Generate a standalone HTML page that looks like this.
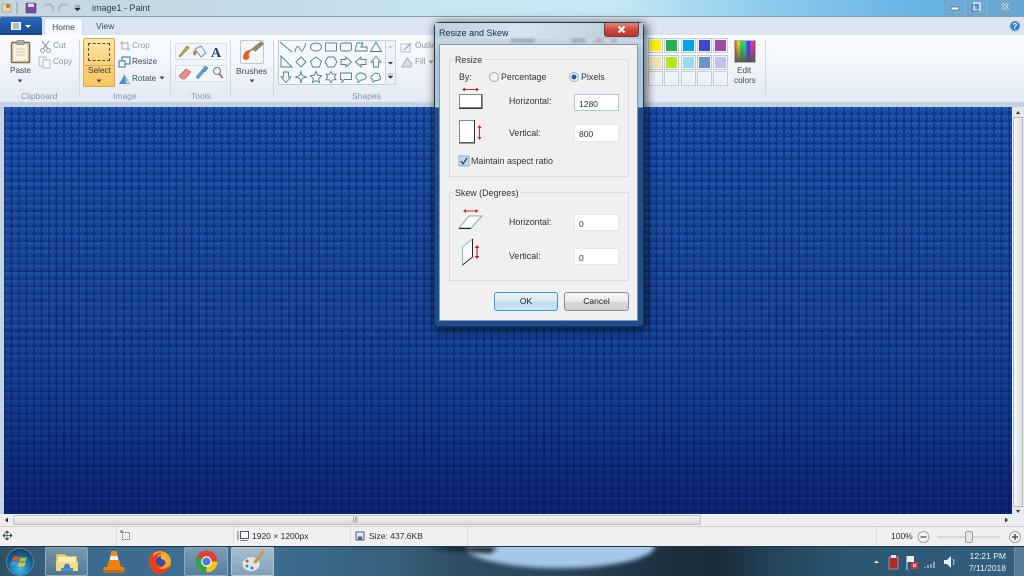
<!DOCTYPE html>
<html><head><meta charset="utf-8"><style>
html,body{margin:0;padding:0;width:1024px;height:576px;overflow:hidden;background:#dce6f1}
*{box-sizing:border-box}
body{font-family:"Liberation Sans",sans-serif;position:relative}
#w{position:absolute;left:0;top:0;width:1024px;height:576px;overflow:hidden;filter:blur(.35px)}
.a{position:absolute}
.t{position:absolute;font-size:8.2px;color:#3b4a5e;white-space:nowrap;line-height:10px}
.g{color:#8d97a3}
.lab{position:absolute;font-size:8.5px;color:#8a97a8;white-space:nowrap;line-height:10px}
.sep{position:absolute;top:39px;width:1px;height:57px;background:#cfd8e3}
.sw{position:absolute;width:15px;height:15px;border:1px solid #c4ccd6;outline:1px solid #f2f5f9;outline-offset:-2px}
.d{position:absolute;font-size:8.9px;color:#333;white-space:nowrap;line-height:10px}
.inp{position:absolute;left:574px;width:45px;background:#fff;border:1px solid #e6e9ec;font-size:8.5px;color:#333;padding:4px 0 0 4px;line-height:10px}
.box{position:absolute;border:1px solid #dcdcdc;border-radius:2px}
.tb{position:absolute;top:547px;height:29px;border-radius:2px}
</style></head><body><div id="w">

<!-- title bar -->
<div class="a" style="left:0;top:0;width:1024px;height:17px;background:linear-gradient(90deg,#c6d6e0 0,#c4dae6 25%,#c8e6f2 45%,#c4e8f4 60%,#8ccbec 75%,#66b3e4 90%,#5ea9dc 100%);border-bottom:1px solid #8b9cab"></div>
<div class="a" style="left:92px;top:2px;font-size:9px;color:#2c3a48;line-height:12px">image1 - Paint</div>
<svg class="a" style="left:0;top:0" width="90" height="17">
<rect x="2" y="4" width="9" height="8" fill="#e8d8a8" stroke="#88a" stroke-width=".6"/>
<circle cx="8" cy="6" r="2" fill="#d07030"/>
<line x1="17" y1="2" x2="17" y2="14" stroke="#8fa0ae"/>
<rect x="26" y="3" width="10" height="10" rx="1" fill="#7a4a9e" stroke="#4c3a78" stroke-width=".6"/><rect x="28" y="3.500" width="6" height="3.500" fill="#ddd"/>
<path d="M44 6 Q49 2 53 7 L53 11" stroke="#aab4bc" fill="none" stroke-width="1.600"/>
<path d="M68 6 Q63 2 59 7 L59 11" stroke="#aab4bc" fill="none" stroke-width="1.600"/>
<path d="M75 6h5M74.500 8h6l-3 3z" fill="#333" stroke="#333" stroke-width=".5"/>
</svg>
<!-- window buttons -->
<div class="a" style="left:944px;top:0;width:76px;height:15px;background:rgba(120,165,195,.4);border:1px solid #7f9db5;border-top:0;border-radius:0 0 3px 3px"></div>
<svg class="a" style="left:944px;top:0" width="76" height="16">
<line x1="21" y1="0" x2="21" y2="15" stroke="#8fb0c8"/><line x1="43" y1="0" x2="43" y2="15" stroke="#8fb0c8"/>
<rect x="7" y="7" width="8" height="3" fill="#eef4f8" stroke="#53677a" stroke-width=".7"/>
<rect x="30" y="3" width="6" height="7" fill="none" stroke="#dfe9f0" stroke-width="1.400"/><rect x="28" y="5" width="6" height="6" fill="none" stroke="#53677a" stroke-width=".8"/>
<path d="M58 3.500l6 6M64 3.500l-6 6" stroke="#dfe8ee" stroke-width="2.600"/><path d="M58 3.500l6 6M64 3.500l-6 6" stroke="#5a6d80" stroke-width=".7"/>
</svg>

<!-- tabs -->
<div class="a" style="left:0;top:17px;width:1024px;height:18px;background:#dbe5f1"></div>
<div class="a" style="left:0;top:17px;width:42px;height:18px;background:linear-gradient(#2b6cb8,#16498f);border-radius:2px 2px 0 0"></div>
<svg class="a" style="left:10px;top:20px" width="24" height="12"><rect x="1" y="2" width="10" height="8" fill="#eef3f8"/><path d="M3 4h6M3 6h6M3 8h6" stroke="#456" stroke-width=".7"/><path d="M15 5h6l-3 3z" fill="#fff"/></svg>
<div class="a" style="left:44px;top:18px;width:39px;height:18px;background:#f7fafd;border:1px solid #cfd9e5;border-bottom:0;border-radius:2px 2px 0 0;font-size:8.500px;color:#3a4a60;text-align:center;line-height:17px">Home</div>
<div class="t" style="left:96px;top:21px;font-size:8.500px">View</div>
<svg class="a" style="left:1009px;top:20px" width="13" height="13"><circle cx="6" cy="6" r="5" fill="#3f78c9" stroke="#9fc0e6"/><text x="6" y="9" font-size="8" font-family="Liberation Sans" font-weight="bold" fill="#fff" text-anchor="middle">?</text></svg>

<!-- ribbon -->
<div class="a" style="left:0;top:35px;width:1024px;height:67px;background:linear-gradient(#fbfcfe 0,#f1f5fa 45%,#e3eaf4 100%)"></div>
<div class="a" style="left:0;top:102px;width:1024px;height:5px;background:#c6d2df"></div>
<div class="sep" style="left:79px"></div><div class="sep" style="left:170px"></div><div class="sep" style="left:230px"></div><div class="sep" style="left:273px"></div><div class="sep" style="left:765px"></div>

<!-- clipboard -->
<svg class="a" style="left:9px;top:39px" width="24" height="26"><rect x="2.500" y="3.500" width="18" height="20" rx="1" fill="#e9dcc3" stroke="#8a6a40" stroke-width="1.500"/><rect x="5" y="6" width="13" height="15" fill="#f6f2e6"/><path d="M7 10h9M7 13h9M7 16h9" stroke="#c5bba5" stroke-width=".8"/><rect x="8" y="1.500" width="7" height="4" fill="#a9adb2" stroke="#666" stroke-width=".5"/></svg>
<div class="t" style="left:10px;top:66px">Paste</div>
<svg class="a" style="left:17px;top:79px" width="6" height="4"><path d="M0.500 0.500h5l-2.500 3z" fill="#445"/></svg>
<svg class="a" style="left:39px;top:40px" width="14" height="13"><path d="M3 1l6 8M10 1l-6 8" stroke="#9aa3ad" stroke-width="1.400"/><circle cx="3.500" cy="10.500" r="2" fill="none" stroke="#9aa3ad"/><circle cx="9.500" cy="10.500" r="2" fill="none" stroke="#9aa3ad"/></svg>
<div class="t g" style="left:53px;top:41px">Cut</div>
<svg class="a" style="left:38px;top:56px" width="14" height="13"><rect x="1" y="1" width="7" height="9" fill="#f3f5f8" stroke="#b5bcc5"/><rect x="5" y="4" width="7" height="8" fill="#f7f8fb" stroke="#b5bcc5"/></svg>
<div class="t g" style="left:53px;top:57px">Copy</div>
<div class="lab" style="left:21px;top:91px">Clipboard</div>

<!-- image -->
<div class="a" style="left:83px;top:38px;width:32px;height:49px;background:linear-gradient(#fde5a8 0,#fbd27e 50%,#f9c65f 100%);border:1px solid #d9a94f;border-radius:2px"></div>
<div class="a" style="left:84px;top:65px;width:30px;height:1px;background:#d9a94f"></div>
<div class="a" style="left:88px;top:43px;width:22px;height:18px;border:1px dashed #5a5244"></div>
<div class="t" style="left:88px;top:66px;color:#333">Select</div>
<svg class="a" style="left:96px;top:79px" width="6" height="4"><path d="M0.500 0.500h5l-2.500 3z" fill="#445"/></svg>
<svg class="a" style="left:119px;top:40px" width="12" height="12"><path d="M3 1v8h8M1 3h8v8" fill="none" stroke="#a2aab3"/></svg>
<div class="t g" style="left:132px;top:41px">Crop</div>
<svg class="a" style="left:118px;top:56px" width="13" height="12"><rect x="4" y="1" width="8" height="7" fill="#f3f6fb" stroke="#2c6fa8"/><rect x="1" y="5" width="6" height="6" fill="#fff" stroke="#2c6fa8"/></svg>
<div class="t" style="left:132px;top:57px">Resize</div>
<svg class="a" style="left:118px;top:72px" width="13" height="13"><path d="M1 12L7 2l1 10z" fill="#4a90c8"/><path d="M8 12V5l4 7z" fill="#b9d4ea" stroke="#7aa6c8" stroke-width=".5"/></svg>
<div class="t" style="left:132px;top:74px">Rotate</div>
<svg class="a" style="left:159px;top:76px" width="6" height="4"><path d="M0.500 0.500h5l-2.500 3z" fill="#445"/></svg>
<div class="lab" style="left:113px;top:91px">Image</div>

<!-- tools -->
<div class="a" style="left:175px;top:43px;width:52px;height:17px;background:#f2f6fb;border:1px solid #d8dfe8;border-radius:2px"></div>
<div class="a" style="left:175px;top:65px;width:52px;height:17px;background:#f2f6fb;border:1px solid #d8dfe8;border-radius:2px"></div>
<svg class="a" style="left:175px;top:43px" width="52" height="40">
<path d="M4 13l8-10 2 2-9 9z" fill="#d9a93c" stroke="#7b6a3a" stroke-width=".6"/>
<path d="M20 6l6-3 5 7-5 4z" fill="#e9f2fa" stroke="#5d8bb0" stroke-width=".8"/><path d="M19 7l3 2-2 4-2-2z" fill="#dd6a4a"/>
<text x="36" y="14" font-size="14" font-weight="bold" font-family="Liberation Serif" fill="#1f3f73">A</text>
<path d="M4 33l7-7 5 3-6 7H7z" fill="#ea8c8c" stroke="#b25a5a" stroke-width=".6"/>
<path d="M21 34l6-7 2 2-6 7zM27 27l3-4 3 2-3 4z" fill="#5f9fd0" stroke="#3f6d96" stroke-width=".5"/>
<circle cx="42" cy="28" r="3.500" fill="#eef" stroke="#778" stroke-width="1"/><path d="M44.500 31l3 4" stroke="#7a6a50" stroke-width="1.500"/>
</svg>
<div class="lab" style="left:191px;top:91px">Tools</div>

<!-- brushes -->
<div class="a" style="left:240px;top:40px;width:24px;height:24px;background:#f4f6f8;border:1px solid #c3c7cc;border-radius:2px"></div>
<svg class="a" style="left:240px;top:40px" width="26" height="25"><path d="M3 18c0-6 5-9 10-8-3 1-5 4-4 6 1 2-1 4-3 4-1 0-3-1-3-2z" fill="#e0622a"/><path d="M10 10c3-1 5 1 5 2l9-8-3-3z" fill="#8f8672"/></svg>
<div class="t" style="left:236px;top:66px;font-size:8.500px">Brushes</div>
<svg class="a" style="left:249px;top:79px" width="6" height="4"><path d="M0.500 0.500h5l-2.500 3z" fill="#445"/></svg>

<!-- shapes -->
<div class="a" style="left:278px;top:40px;width:108px;height:45px;background:#f4f7fb;border:1px solid #bfcbd9"></div>
<div class="a" style="left:385px;top:40px;width:11px;height:45px;background:#eef2f7;border:1px solid #cdd6e0"></div>
<svg class="a" style="left:278px;top:40px" width="108" height="45" fill="none" stroke="#4f8190" stroke-width=".9">
<g transform="translate(8 7)"><path d="M-6-5L6 5"/></g>
<g transform="translate(23 7)"><path d="M-6 5c1-6 3-7 5-3s3 2 6-6"/></g>
<g transform="translate(38 7)"><ellipse rx="5.500" ry="4"/></g>
<g transform="translate(53 7)"><rect x="-5.500" y="-4" width="11" height="8"/></g>
<g transform="translate(68 7)"><rect x="-5.500" y="-4" width="11" height="8" rx="2"/></g>
<g transform="translate(83 7)"><path d="M-6 4l2-8h6l-2 4h6v4z"/></g>
<g transform="translate(98 7)"><path d="M0-5l5.500 9.500h-11z"/></g>
<g transform="translate(8 22)"><path d="M-5-6V5H6z"/></g>
<g transform="translate(23 22)"><path d="M0-5l5 5-5 5-5-5z"/></g>
<g transform="translate(38 22)"><path d="M0-5l5.500 4-2 6h-7l-2-6z"/></g>
<g transform="translate(53 22)"><path d="M-3-5h6l3 5-3 5h-6l-3-5z"/></g>
<g transform="translate(68 22)"><path d="M-5-2.500h5V-5l5.500 5L0 5V2.500h-5z"/></g>
<g transform="translate(83 22)"><path d="M5-2.500H0V-5l-5.500 5L0 5V2.500h5z"/></g>
<g transform="translate(98 22)"><path d="M-2.500 5V0H-5l5-5.500L5 0H2.500v5z"/></g>
<g transform="translate(8 37)"><path d="M-2.500-5V0H-5l5 5.500L5 0H2.500v-5z"/></g>
<g transform="translate(23 37)"><path d="M0-5.500l1.300 4.200 4.200 1.300-4.200 1.300L0 5.500-1.300 1.300-5.500 0l4.200-1.300z"/></g>
<g transform="translate(38 37)"><path d="M0-5.500l1.700 3.700 4 .5-3 2.800.8 4L0 3.500-3.500 5.500l.8-4-3-2.800 4-.5z"/></g>
<g transform="translate(53 37)"><path d="M0-5.500l1.700 2.700h3.300L3.300 0 5 2.800H1.700L0 5.500-1.700 2.800H-5L-3.300 0-5-2.800h3.300z"/></g>
<g transform="translate(68 37)"><path d="M-5.500-4h11v6.500h-7l-2.500 3v-3h-1.500z"/></g>
<g transform="translate(83 37)"><path d="M-3 2.500C-7 1-5-4 0-4s7 5 3 6.500c-1 .5-2 .5-3 .5l-3 2.500z"/></g>
<g transform="translate(98 37)"><path d="M-3.500 2.500c-3-2-1-4 0-4 .5-2 3-3 4-2 2-.5 4 1 3 3 2 1 1 3.500-1 3.500-1 1-2 .5-3 .5L-3 5z"/></g>
</svg>
<svg class="a" style="left:386px;top:42px" width="9" height="42"><path d="M2.500 6h4L4.500 3z" fill="#c3ccd6"/><path d="M2 20h5l-2.500 2.500z" fill="#334"/><path d="M2 32h5M2 34h5l-2.500 2.500z" fill="#334" stroke="#334" stroke-width=".4"/></svg>
<svg class="a" style="left:399px;top:41px" width="14" height="28"><rect x="2" y="3" width="9" height="8" fill="none" stroke="#b5bdc6"/><path d="M5 9l7-7" stroke="#a8b0ba" stroke-width="1.500"/><path d="M3 26l5-9 5 6-1 3z" fill="#d6dde6" stroke="#aab3bf"/></svg>
<div class="t g" style="left:415px;top:41px">Outline</div>
<div class="t g" style="left:415px;top:57px">Fill</div>
<svg class="a" style="left:428px;top:60px" width="6" height="4"><path d="M0.500 0.500h5l-2.500 3z" fill="#99a"/></svg>
<div class="lab" style="left:352px;top:91px">Shapes</div>

<!-- colors -->
<div class="sw" style="left:648px;top:38px;background:#fff200"></div>
<div class="sw" style="left:664px;top:38px;background:#22b14c"></div>
<div class="sw" style="left:681px;top:38px;background:#00a2e8"></div>
<div class="sw" style="left:697px;top:38px;background:#3f48cc"></div>
<div class="sw" style="left:713px;top:38px;background:#a349a4"></div>
<div class="sw" style="left:648px;top:55px;background:#efe4b0"></div>
<div class="sw" style="left:664px;top:55px;background:#b5e61d"></div>
<div class="sw" style="left:681px;top:55px;background:#99d9ea"></div>
<div class="sw" style="left:697px;top:55px;background:#7092be"></div>
<div class="sw" style="left:713px;top:55px;background:#c8bfe7"></div>
<div class="sw" style="left:648px;top:71px;background:#eef2f8"></div>
<div class="sw" style="left:664px;top:71px;background:#eef2f8"></div>
<div class="sw" style="left:681px;top:71px;background:#eef2f8"></div>
<div class="sw" style="left:697px;top:71px;background:#eef2f8"></div>
<div class="sw" style="left:713px;top:71px;background:#eef2f8"></div>
<div class="a" style="left:734px;top:40px;width:22px;height:23px;border:1px solid #b8b4b0;background:linear-gradient(transparent 15%,rgba(85,85,85,.95)),linear-gradient(90deg,#d44,#dd3,#3c3,#3cc,#33d,#d3d,#d33)"></div>
<div class="t" style="left:737px;top:66px">Edit</div>
<div class="t" style="left:734px;top:76px">colors</div>

<!-- canvas area -->
<div class="a" style="left:0;top:107px;width:1024px;height:407px;background:#c5d3e2"></div>
<svg class="a" style="left:4px;top:107px" width="1008" height="407">
<defs>
<g id="cell"><rect width="7.500" height="7.500" fill="#113588"/><path d="M0.800 0h5.900v4.200L3.750 7 0.800 4.200z" fill="#2059b3"/><path d="M2.200 2.400l1.550 1 1.550-1v2.200l-1.550 1.400-1.550-1.400z" fill="#17439c"/></g>
<pattern id="p" width="15" height="15" patternUnits="userSpaceOnUse">
<use href="#cell"/><use href="#cell" x="7.500"/><use href="#cell" y="7.500"/><use href="#cell" x="7.500" y="7.500"/>
</pattern>
<linearGradient id="s" x1="0" y1="0" x2="0" y2="1"><stop offset="0" stop-color="#000" stop-opacity="0"/><stop offset=".6" stop-color="#00104a" stop-opacity=".2"/><stop offset="1" stop-color="#000a50" stop-opacity=".62"/></linearGradient>
</defs>
<rect width="1008" height="407" fill="url(#p)"/><rect width="1008" height="407" fill="url(#s)"/>
</svg>
<!-- v scrollbar -->
<div class="a" style="left:1012px;top:107px;width:12px;height:407px;background:#e6e8ea"></div>
<div class="a" style="left:1013px;top:117px;width:10px;height:390px;background:linear-gradient(90deg,#f6f6f6,#dcdcdc);border:1px solid #b7bcc2"></div>
<svg class="a" style="left:1013px;top:107px" width="10" height="410"><path d="M3 7h4L5 4z" fill="#333"/><path d="M3 403h4l-2 3z" fill="#333"/></svg>
<!-- h scrollbar -->
<div class="a" style="left:0;top:514px;width:1024px;height:12px;background:#eceef0"></div>
<div class="a" style="left:13px;top:515px;width:688px;height:10px;background:linear-gradient(#f4f4f4,#d6d8da);border:1px solid #c0c4c8;border-radius:2px"></div>
<div class="a" style="left:353px;top:517px;font-size:6px;line-height:6px;color:#666">|||</div>
<svg class="a" style="left:3px;top:516px" width="8" height="8"><path d="M5 1.500v5L2 4z" fill="#333"/></svg>
<svg class="a" style="left:1002px;top:516px" width="8" height="8"><path d="M3 1.500v5L6 4z" fill="#333"/></svg>

<!-- status bar -->
<div class="a" style="left:0;top:526px;width:1024px;height:21px;background:#f0f0f0;border-top:1px solid #d0d2d4;border-bottom:1px solid #25333f"></div>
<div class="a" style="left:116px;top:527px;width:1px;height:19px;background:#dedede"></div>
<div class="a" style="left:233px;top:527px;width:1px;height:19px;background:#dedede"></div>
<div class="a" style="left:350px;top:527px;width:1px;height:19px;background:#dedede"></div>
<div class="a" style="left:467px;top:527px;width:1px;height:19px;background:#dedede"></div>
<div class="a" style="left:876px;top:527px;width:1px;height:19px;background:#dedede"></div>
<svg class="a" style="left:2px;top:530px" width="12" height="12"><path d="M5 1v9M1 5.500h9M5 1L3.500 2.500h3zM5 10L3.500 8.500h3zM1 5.500L2.500 4v3zM10 5.500L8.500 4v3z" stroke="#3c4a55" fill="#3c4a55" stroke-width=".8"/></svg>
<svg class="a" style="left:120px;top:530px" width="12" height="12"><rect x="2.500" y="2.500" width="7" height="7" fill="none" stroke="#667" stroke-dasharray="1.500 1"/><path d="M1 3V1h2" stroke="#556" fill="none"/></svg>
<svg class="a" style="left:237px;top:530px" width="13" height="12"><rect x="3.500" y="1.500" width="8" height="7" fill="#fff" stroke="#4c5c6c"/><path d="M1 1v9M3 10.500h8" stroke="#4c5c6c" stroke-width=".8"/></svg>
<div class="a" style="left:252px;top:531px;font-size:8.500px;color:#2b2b2b;line-height:11px">1920 × 1200px</div>
<svg class="a" style="left:355px;top:531px" width="11" height="11"><rect x="1" y="1" width="8" height="8" fill="#dfe6ee" stroke="#4a6080"/><rect x="3" y="5.500" width="4" height="3.500" fill="#4a6080"/></svg>
<div class="a" style="left:369px;top:531px;font-size:8.500px;color:#2b2b2b;line-height:11px">Size: 437.6KB</div>
<div class="a" style="left:891px;top:531px;font-size:8.500px;color:#2b2b2b;line-height:11px">100%</div>
<svg class="a" style="left:916px;top:528px" width="108" height="18"><circle cx="7.500" cy="9" r="5.500" fill="#f4f4f4" stroke="#a5a5a5"/><path d="M4.500 9h6" stroke="#666" stroke-width="1.500"/><line x1="21" y1="9" x2="84" y2="9" stroke="#c0c0c0"/><rect x="49.500" y="3.500" width="7" height="11" rx="2" fill="#e6e6e6" stroke="#999"/><circle cx="99" cy="9" r="5.500" fill="#f4f4f4" stroke="#a5a5a5"/><path d="M96 9h6M99 6v6" stroke="#555" stroke-width="1.500"/></svg>

<!-- taskbar -->
<div class="a" style="left:0;top:547px;width:1024px;height:29px;background:linear-gradient(90deg,#2f4f66 0,#3b6c8e 8%,#3d7095 25%,#3a6a8c 30%,#365f7c 39%,#2f5068 44%,#2a4358 55%,#1c3040 65%,#1a2c3a 70%,#24465e 76%,#2a5570 82%,#33607f 100%)"></div>
<svg class="a" style="left:380px;top:547px" width="360" height="29"><defs><filter id="bl" x="-20%" y="-50%" width="140%" height="200%"><feGaussianBlur stdDeviation="2.500"/></filter></defs><ellipse cx="180" cy="-1" rx="95" ry="22" fill="#a4c8ea" filter="url(#bl)"/><path d="M47 0h70l-6 6c-20-1-45-3-64-6z" fill="#10161c" filter="url(#bl)"/></svg>
<!-- start orb -->
<svg class="a" style="left:4px;top:547px" width="32" height="29"><defs><radialGradient id="o" cx=".5" cy=".75" r=".7"><stop offset="0" stop-color="#3fc0ee"/><stop offset=".55" stop-color="#1c6fae"/><stop offset="1" stop-color="#1a3f62"/></radialGradient></defs><circle cx="16" cy="15" r="13.500" fill="url(#o)" stroke="#6d8ea6" stroke-width=".7"/><path d="M9 10q3-1.500 6.500 0l-1 4q-3-1.500-6.500 0z" fill="#e8532a"/><path d="M16.500 10q3 1.500 6.500 0l-1 4q-3 1.500-6.500 0z" fill="#9ac63c"/><path d="M7.500 15q3-1.500 6.500 0l-1 4q-3-1.500-6.500 0z" fill="#3f9ae0"/><path d="M15 15q3 1.500 6.500 0l-1 4q-3 1.500-6.500 0z" fill="#f0c22e"/></svg>
<!-- explorer -->
<div class="tb" style="left:45px;width:43px;background:linear-gradient(rgba(255,255,255,.32),rgba(255,255,255,.12));border:1px solid #8fa8ba"></div>
<svg class="a" style="left:55px;top:551px" width="24" height="22"><path d="M1 3h9l2 2h10v14H1z" fill="#e9cf78" stroke="#a98c3e" stroke-width=".6"/><rect x="3" y="6" width="18" height="5" fill="#f6eec0"/><path d="M1 11h22v9H1z" fill="#f0dc8e"/><path d="M8 19l2-6h4l2 6z" fill="#3f7fbf"/><rect x="6" y="17" width="12" height="3" fill="#4a90c8"/></svg>
<!-- vlc -->
<svg class="a" style="left:103px;top:550px" width="22" height="24"><path d="M8.500 1h5l1.500 5h-8z" fill="#ef8a1c"/><path d="M7.500 6h7l1 4h-9z" fill="#f0f0f0"/><path d="M6 10h10l2 7H4z" fill="#ef7e12"/><path d="M1 17h20l1 4H0z" fill="#e8861c"/><rect x="1" y="20" width="20" height="3" fill="#c86c10"/></svg>
<!-- firefox -->
<svg class="a" style="left:147px;top:549px" width="26" height="26"><circle cx="13" cy="13" r="11" fill="#f9a825"/><path d="M2 13c0-6 3-9 5-10l-1 5c3-4 7-5 9-4-2 1-5 3-5 5 2-1 8 0 8 4 0 5-5 7-8 5 3 3 9 3 13-2-1 6-6 9-11 9C6 25 2 19 2 13z" fill="#e3401f"/><circle cx="14" cy="12" r="5" fill="#3f4aa8"/><path d="M14 7c3 0 6 3 5 7-1-3-3-4-5-4z" fill="#f9c82e"/></svg>
<!-- chrome -->
<div class="tb" style="left:184px;width:44px;background:linear-gradient(rgba(255,255,255,.32),rgba(255,255,255,.12));border:1px solid #8fa8ba"></div>
<svg class="a" style="left:195px;top:550px" width="23" height="23"><circle cx="11.500" cy="11.500" r="11" fill="#e0402f"/><path d="M11.500 11.500L1.900 6.200A11 11 0 0 0 11.500 22.500z" fill="#2fa34c"/><path d="M11.500 11.500H22.500A11 11 0 0 1 11.500 22.500z" fill="#f8c91c"/><circle cx="11.500" cy="11.500" r="5.200" fill="#fff"/><circle cx="11.500" cy="11.500" r="4" fill="#3f7fe0"/></svg>
<!-- paint -->
<div class="tb" style="left:231px;width:43px;background:linear-gradient(rgba(255,255,255,.55),rgba(255,255,255,.35));border:1px solid #b5c8d6"></div>
<svg class="a" style="left:241px;top:549px" width="25" height="25"><ellipse cx="10" cy="15" rx="9" ry="7.500" fill="#dde6ee" stroke="#90a6b8" stroke-width=".7"/><circle cx="6" cy="12" r="1.500" fill="#e04a3a"/><circle cx="6" cy="17" r="1.500" fill="#3fa14c"/><circle cx="11" cy="19" r="1.500" fill="#3a7fd0"/><path d="M12 13L22 1l2 2-9 12z" fill="#c89a50"/></svg>
<!-- tray -->
<svg class="a" style="left:870px;top:550px" width="72" height="24" fill="none"><path d="M4 13h5L6.500 10.500z" fill="#e8eef4"/><rect x="19" y="7" width="9" height="12" fill="#b02a2a" stroke="#dde" stroke-width=".5"/><rect x="21" y="5" width="5" height="3" fill="#dde"/><path d="M37 6v14" stroke="#dfe6ec"/><path d="M37 6h7v6h-7z" fill="#e8eef3"/><rect x="41" y="12" width="7" height="7" rx="1" fill="#cc3a3a"/><path d="M43 14l3 3M46 14l-3 3" stroke="#fff" stroke-width=".8"/><path d="M55 18v-1M58 18v-3M61 18v-4M64 18v-6" stroke="#aebcc8" stroke-width="1.500"/></svg>
<svg class="a" style="left:942px;top:553px" width="14" height="18"><path d="M2 7h3l4-4v12l-4-4H2z" fill="#e8eef4"/><path d="M11 6q2 3 0 6" stroke="#cdd8e0" fill="none"/></svg>
<div class="a" style="left:956px;top:550px;width:50px;text-align:right;font-size:8.500px;color:#edf2f6;line-height:12px;white-space:nowrap">12:21 PM<br>7/11/2018</div>
<div class="a" style="left:1014px;top:547px;width:10px;height:29px;background:rgba(255,255,255,.18);border-left:1px solid #6f8a9c"></div>

<!-- dialog -->
<div class="a" style="left:434px;top:22px;width:210px;height:305px;border:1px solid #22384a;border-radius:5px;background:linear-gradient(#b8d4e8 0,#c8d6e0 18px,#a9c6dc 30px,#a9c6dc 84px,#1f4c90 85px,#1f4c90 100%);box-shadow:2px 2px 9px 2px rgba(0,0,0,.55)"></div>
<div class="a" style="left:435px;top:23px;width:208px;height:16px;background:linear-gradient(90deg,#b9d0e2,#d5e4ef 40%,#cad8e2 70%,#b0c8da)"></div>
<svg class="a" style="left:435px;top:36px" width="208" height="10"><g fill="#5a6670" opacity=".55" style="filter:blur(1.500px)"><rect x="76" y="3" width="24" height="3"/><rect x="136" y="3" width="14" height="3"/><rect x="160" y="3" width="8" height="3" fill="#a06a70"/><rect x="176" y="3" width="6" height="3" fill="#a06a70"/></g></svg>
<div class="a" style="left:439px;top:27px;font-size:9px;color:#22303c;line-height:12px">Resize and Skew</div>
<div class="a" style="left:604px;top:23px;width:35px;height:14px;background:linear-gradient(#d98a80 0,#cc4a3c 50%,#b8322a 100%);border:1px solid #7e3a36;border-top:0;border-radius:0 0 3px 3px"></div>
<svg class="a" style="left:604px;top:23px" width="35" height="14"><path d="M14.500 3.500l6 6M20.500 3.500l-6 6" stroke="#f5f5f5" stroke-width="2.200"/></svg>
<div class="a" style="left:439px;top:44px;width:199px;height:277px;background:#f0f0f0;border:1px solid #7f9bb0"></div>

<div class="box" style="left:449px;top:59px;width:180px;height:118px"></div>
<div class="d" style="left:454px;top:55px;background:#f0f0f0;padding:0 2px 0 1px">Resize</div>
<div class="d" style="left:459px;top:72px">By:</div>
<svg class="a" style="left:488px;top:71px" width="12" height="12"><circle cx="6" cy="6" r="4.500" fill="#f2f2f2" stroke="#aaa"/></svg>
<div class="d" style="left:501px;top:72px">Percentage</div>
<svg class="a" style="left:568px;top:71px" width="12" height="12"><circle cx="6" cy="6" r="4.500" fill="#e8eef4" stroke="#a5b2c0"/><circle cx="6" cy="6" r="2.500" fill="#2c5f94"/></svg>
<div class="d" style="left:581px;top:72px">Pixels</div>

<svg class="a" style="left:456px;top:85px" width="32" height="60">
<path d="M8.500 4.500h12" stroke="#c62828"/><path d="M6 4.500l3-2v4zM23 4.500l-3-2v4z" fill="#c62828"/>
<rect x="3.500" y="9.500" width="22" height="13" fill="#fff" stroke="#888"/><path d="M3 23.500h23V9" stroke="#333" fill="none"/>
<rect x="3.500" y="35.500" width="15" height="22" fill="#fff" stroke="#888"/><path d="M18.500 35v23H3" stroke="#333" fill="none"/>
<path d="M23.500 43v10" stroke="#c62828"/><path d="M23.500 40l-2 3h4zM23.500 55l-2-3h4z" fill="#c62828"/>
</svg>
<div class="d" style="left:509px;top:96px">Horizontal:</div>
<div class="inp" style="top:94px;height:17px;border-color:#b5c8d6">1280</div>
<div class="d" style="left:509px;top:128px">Vertical:</div>
<div class="inp" style="top:124px;height:18px">800</div>
<svg class="a" style="left:458px;top:155px" width="12" height="12"><rect x="1" y="1" width="10" height="10" fill="#c8d8ec" stroke="#9aacc2"/><path d="M3 6l2 3 4-6" stroke="#2a3f5e" fill="none" stroke-width="1.300"/></svg>
<div class="d" style="left:471px;top:156px">Maintain aspect ratio</div>

<div class="box" style="left:449px;top:192px;width:180px;height:89px"></div>
<div class="d" style="left:454px;top:188px;background:#f0f0f0;padding:0 2px 0 1px">Skew (Degrees)</div>
<svg class="a" style="left:456px;top:205px" width="32" height="62">
<path d="M9 6h12" stroke="#c62828"/><path d="M7 6l3-2v4zM22.500 6l-3-2v4z" fill="#c62828"/>
<path d="M3 23l10-12h13L15 23z" fill="#fff" stroke="#9aa"/><path d="M3 23.500h12" stroke="#222"/>
<path d="M6.500 42l10-8v18l-10 8z" fill="#f6f8fb" stroke="#8aa0b8" stroke-width=".8"/><path d="M16.500 34v18" stroke="#222"/><path d="M6.500 60l10-8" stroke="#333"/>
<path d="M21 43v9" stroke="#c62828" stroke-width="1.200"/><path d="M21 40l-2.500 3h5zM21 54l-2.500-3h5z" fill="#c62828"/>
</svg>
<div class="d" style="left:509px;top:217px">Horizontal:</div>
<div class="inp" style="top:214px;height:17px">0</div>
<div class="d" style="left:509px;top:251px">Vertical:</div>
<div class="inp" style="top:248px;height:17px">0</div>

<div class="a" style="left:494px;top:292px;width:64px;height:19px;background:linear-gradient(#e6f3fa 0,#d8ecf6 50%,#bfdcec 52%,#c9e4f2 100%);border:1px solid #3a9bc8;border-radius:3px;font-size:8.500px;color:#222;text-align:center;line-height:17px">OK</div>
<div class="a" style="left:564px;top:292px;width:65px;height:19px;background:linear-gradient(#f4f4f4 0,#ececec 50%,#d8d8d8 52%,#cfcfcf 100%);border:1px solid #8c8c8c;border-radius:3px;font-size:8.500px;color:#222;text-align:center;line-height:17px">Cancel</div>
</div></body></html>
